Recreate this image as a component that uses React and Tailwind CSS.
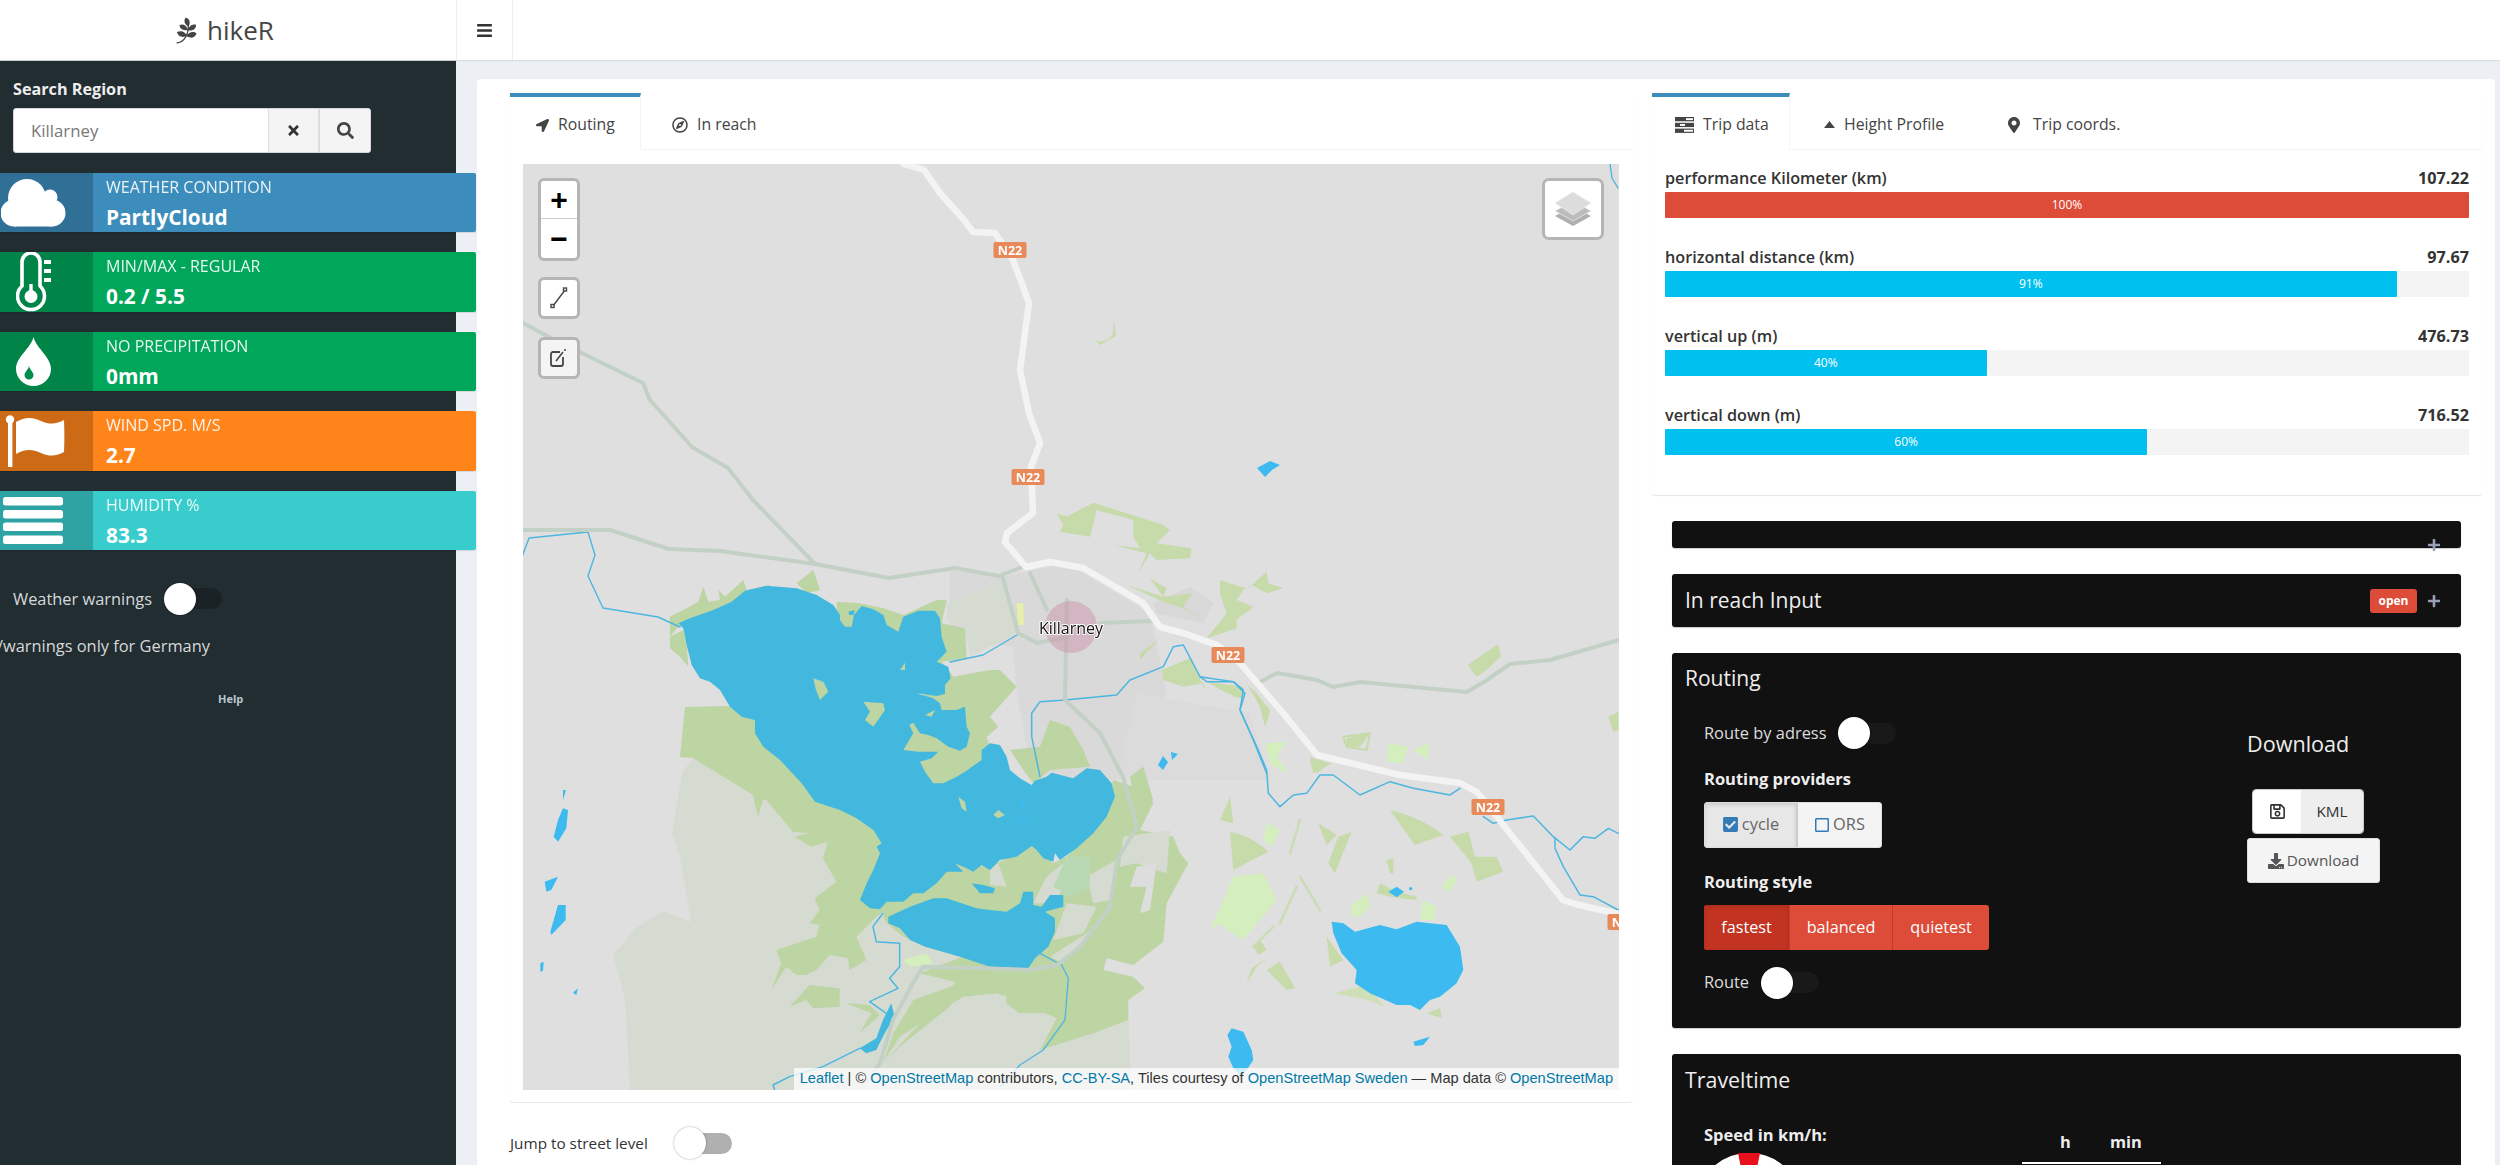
import React from "react";
import {
  FaPagelines,
  FaBars,
  FaTimes,
  FaSearch,
  FaLocationArrow,
  FaRegCompass,
  FaMapMarkerAlt,
  FaPlus,
  FaRegSave,
  FaDownload,
  FaCheckSquare,
  FaRegSquare,
} from "react-icons/fa";

/* =======================
   SIDEBAR ICONS
======================= */

const CloudIcon = () => (
  <svg width="65" height="48" viewBox="0 0 65 48" className="ml-[1px] shrink-0" fill="#fff">
    <circle cx="26" cy="19" r="19" />
    <circle cx="49" cy="18" r="7.5" />
    <circle cx="51" cy="34" r="13.5" />
    <circle cx="13" cy="34" r="13.5" />
    <rect x="13" y="24" width="38" height="23.5" />
  </svg>
);

const ThermoIcon = () => (
  <svg width="36" height="60" viewBox="0 0 36 60" className="ml-[16px] shrink-0" fill="#fff">
    <path d="M6 34 V10 a9 9 0 0 1 18 0 V34 a13.5 13.5 0 1 1 -18 0 Z" fill="none" stroke="#fff" strokeWidth="3.6" />
    <circle cx="15" cy="44.5" r="6.5" />
    <rect x="13.3" y="32" width="3.4" height="10" />
    <rect x="28" y="8" width="7" height="4" />
    <rect x="28" y="17" width="7" height="4" />
    <rect x="28" y="26" width="7" height="4" />
  </svg>
);

const DropIcon = () => (
  <svg width="35" height="49" viewBox="0 0 35 49" className="ml-[16px] shrink-0">
    <path d="M17.5 0 C20 11 35 20 35 32 A17.5 17 0 0 1 0 32 C0 20 15 11 17.5 0 Z" fill="#fff" />
    <path d="M13 29 C14 33 17.5 35 17.5 38 A4.5 4.5 0 0 1 8.5 38 C8.5 35 12 33 13 29 Z" fill="#008d4c" />
  </svg>
);

const FlagIcon = () => (
  <svg width="64" height="52" viewBox="0 0 64 52" className="ml-[5px] shrink-0" fill="#fff">
    <circle cx="5" cy="4.5" r="4.2" />
    <rect x="3" y="5" width="4.4" height="47" />
    <path d="M11 7 C20 2 27 2 36 6 C45 10 52 9 59 5 C59.5 16 59.5 27 59 37 C52 41 45 42 36 38 C27 34 20 34 11 39 Z" />
  </svg>
);

const BarsIcon = () => (
  <svg width="60" height="47" viewBox="0 0 60 47" className="ml-[3px] shrink-0" fill="#fff">
    <rect x="0" y="0" width="60" height="8.4" rx="2.5" />
    <rect x="0" y="13" width="60" height="8.4" rx="2.5" />
    <rect x="0" y="25.5" width="60" height="8.4" rx="2.5" />
    <rect x="0" y="38.5" width="60" height="8.4" rx="2.5" />
  </svg>
);

const TasksIcon = () => (
  <svg width="19" height="16" viewBox="0 0 19 16" className="shrink-0" fill="#444">
    <rect x="0" y="0" width="19" height="4.3" />
    <rect x="0" y="5.8" width="19" height="4.3" />
    <rect x="0" y="11.6" width="19" height="4.3" />
    <rect x="11" y="1.2" width="7" height="1.9" fill="#fff" />
    <rect x="5" y="7" width="5" height="1.9" fill="#fff" />
    <rect x="9" y="12.8" width="9" height="1.9" fill="#fff" />
  </svg>
);

/* =======================
   SMALL PARTS
======================= */

function Switch({ track, className }) {
  return (
    <span className={`relative inline-block h-[32px] w-[58px] shrink-0 ${className || ""}`}>
      <span className={`absolute left-[14px] right-0 top-[5.5px] h-[21px] rounded-full ${track}`} />
      <span className="absolute left-0 top-0 h-[32px] w-[32px] rounded-full bg-white shadow-[0_0_2px_rgba(0,0,0,0.4)]" />
    </span>
  );
}

function InfoBox({ color, icon, label, value }) {
  return (
    <div className={`flex h-[59.4px] w-[476px] rounded-r-[2px] text-white shadow-[0_1px_1px_rgba(0,0,0,0.1)] ${color}`}>
      <div className="flex h-full w-[93px] shrink-0 items-center bg-black/20">{icon}</div>
      <div className="pl-[13px]">
        <div className="mt-[3px] h-[22px] text-[16px] uppercase leading-[22px] opacity-90">{label}</div>
        <div className="mt-[6px] text-[20.8px] font-bold leading-[26px]">{value}</div>
      </div>
    </div>
  );
}

function Tab({ active, icon, label, className }) {
  return (
    <div
      className={`flex h-[57px] items-center gap-[9px] text-[15.8px] text-[#444] ${
        active ? "border-t-[4px] border-t-[#3c8dbc] border-r border-r-[#f4f4f4] bg-white pt-[3px]" : "border-b border-b-[#f4f4f4] pt-[7px]"
      } ${className}`}
    >
      {icon}
      <span>{label}</span>
    </div>
  );
}

function Progress({ label, value, pct, color }) {
  return (
    <div className="mb-[26px]">
      <div className="flex h-[26px] items-center justify-between text-[16.2px] text-[#333]">
        <span className="font-semibold">{label}</span>
        <span className="font-bold">{value}</span>
      </div>
      <div className="mt-[1px] h-[26px] bg-[#f4f4f4]">
        <div
          className={`flex h-full items-center justify-center rounded-[1px] text-[12px] text-white ${color}`}
          style={{ width: `${pct}%` }}
        >
          {pct}%
        </div>
      </div>
    </div>
  );
}

const MapBtn = ({ children, className }) => (
  <div className={`flex h-[42px] w-[42px] items-center justify-center rounded-[6px] border-[3px] border-[#b5b5b5] ${className || "bg-white"}`}>
    {children}
  </div>
);

/* =======================
   MAP DRAWING
   paths are written in crop pixels, hence the scaled groups
======================= */

const Z7 = "translate(670 570) scale(0.3333)";
const Z8 = "translate(523 800) scale(0.3333)";
const Z9 = "translate(880 770) scale(0.3333)";
const Z10 = "translate(950 480) scale(0.3333)";
const Z11 = "translate(1200 660) scale(0.3333)";

const GREEN = "#bdd4a3";
const MINT = "#d5eebd";
const PALE = "#d6dbd2";
const LAKE = "#43b8df";
const LAKE2 = "#3dbbf0";
const RIVER = "#4db6e0";
const GROAD = "#c3d0c5";

function Shield({ x, y }) {
  return (
    <g>
      <rect x={x - 16.5} y={y - 8} width="33" height="16" rx="2" fill="#e8895a" />
      <text x={x} y={y + 4.5} textAnchor="middle" fontSize="12.5" fontWeight="700" fill="#fff" fontFamily="Open Sans, sans-serif">
        N22
      </text>
    </g>
  );
}

function MapArt() {
  return (
    <svg viewBox="523 164 1096 926" className="block h-full w-full blur-[0.7px]" strokeLinejoin="round" strokeLinecap="round">
      {/* park underlay */}
      <path d="M693 758 L682 773 L672 833 L680 857 L691 922 L663 911 L636 928 L613 955 L625 1000 L630 1090 L1131 1090 L1128 1000 L1000 900 L800 800 Z" fill={PALE} />

      {/* town */}
      <g transform={Z10}>
        <path d="M0 270 L160 290 L350 250 L600 400 L650 640 L560 800 L500 900 L250 900 L200 640 L190 500 L0 480 Z" fill="#d9d9d9" />
        <path d="M560 640 L900 700 L960 900 L500 900 Z" fill="#dbdbdb" />
        <path d="M610 370 L720 320 L790 370 L760 430 L620 400 Z" fill="#d8d8d8" />
      </g>

      {/* greens around the big lake */}
      <g transform={Z8} fill={GREEN}>
        <path d="M486 -279 L471 -129 L510 -126 L690 -15 L705 51 L720 0 L730 0 L810 95 L860 100 L815 110 L865 140 L915 125 L900 175 L940 245 L875 295 L890 330 L860 370 L890 375 L880 410 L760 450 L775 490 L745 570 L790 500 L820 525 L850 525 L880 510 L920 465 L975 475 L980 510 L1030 480 L1020 455 L1000 410 L1060 350 L1090 330 L1300 400 L1300 -300 Z" />
        <path d="M800 620 L860 555 L950 565 L950 620 L870 625 L850 600 L800 620 Z" />
        <path d="M970 610 L1040 615 L1070 645 L1010 700 L1045 640 Z" />
        <path d="M1080 790 L1200 660 L1220 630 L1300 545 L1320 540 L1280 620 L1130 740 Z" />
        <path d="M1450 590 L1560 580 L1560 640 L1490 640 L1450 610 Z" />
      </g>
      <g transform={Z7} fill={GREEN}>
        <path d="M0 200 L0 140 L50 115 L85 95 L100 50 L115 95 L150 90 L145 60 L165 80 L220 30 L230 60 L300 45 L300 110 L25 170 Z" />
        <path d="M0 200 L40 180 L50 225 L55 290 L30 260 L0 235 Z" />
        <path d="M380 40 L430 0 L450 60 L410 70 Z" />
        <path d="M500 95 L570 100 L640 115 L700 135 L745 115 L800 90 L830 90 L815 160 L885 175 L890 265 L815 275 L850 320 L960 300 L990 300 L1040 350 L960 440 L985 470 L950 500 L960 530 L935 590 L800 650 L700 560 L720 450 L800 300 L700 200 L500 170 Z" />
        <path d="M640 1040 L650 990 L720 955 L800 915 L860 880 L960 890 L1000 870 L1085 825 L1150 880 L1190 860 L1300 750 L1390 780 L1350 880 L1300 1040 L1180 1170 L1100 1150 L1075 1195 L870 1160 L700 1100 L650 1060 Z" />
        <path d="M1020 540 L1060 600 L1090 640 L1140 600 L1260 590 L1240 540 L1200 470 L1140 450 L1110 530 Z" />
        <path d="M1380 620 L1420 590 L1450 690 L1400 730 Z" />
      </g>
      <g transform={Z9} fill={GREEN}>
        <path d="M700 30 L790 60 L820 100 L780 180 L880 200 L900 250 L925 280 L860 400 L850 515 L760 585 L680 565 L670 600 L760 620 L795 655 L745 690 L745 750 L640 790 L480 840 L530 745 L380 680 L350 670 L250 680 L150 740 L60 800 L10 875 L40 790 L100 690 L240 640 L120 610 L400 500 L600 300 Z" />
      </g>

      {/* pale patches and mint on the green */}
      <g transform={Z7} fill={PALE}>
        <path d="M830 100 L1000 30 L1040 190 L900 260 L885 170 L830 150 Z" />
        <path d="M960 900 L985 880 L1010 950 L960 945 Z" />
        <path d="M1130 920 L1180 880 L1210 930 L1140 1000 L1090 1000 Z" />
        <path d="M1190 1000 L1280 1010 L1240 1090 L1150 1110 Z" />
        <path d="M1250 920 L1340 870 L1320 990 L1270 1000 Z" />
        <path d="M1360 800 L1500 780 L1490 910 L1400 880 L1350 890 Z" />
        <path d="M1140 1160 L1250 1090 L1300 1040 L1180 1180 Z" />
      </g>
      <g transform={Z7}>
        <path d="M1190 860 L1260 860 L1260 950 L1200 980 L1150 950 Z" fill="#b9d9b4" />
        <path d="M1040 100 L1060 100 L1062 165 L1045 165 Z" fill="#e8efa8" />
        <path d="M700 1170 L770 1150 L790 1180 L720 1190 Z" fill={MINT} />
        <path d="M1400 890 L1460 880 L1440 1020 L1410 1030 L1430 950 L1380 950 Z" fill="#dddddd" />
      </g>

      {/* greens north of the N22 and to the east */}
      <g transform={Z10} fill="#c6daaa">
        <path fillRule="evenodd" d="M320 100 L350 110 L430 68 L640 135 L660 150 L620 190 L725 205 L720 235 L620 240 L600 220 L565 280 L590 220 L490 195 L420 170 L330 155 L340 135 Z M440 90 L420 170 L490 195 L570 205 L550 170 L550 120 Z" />
        <path d="M530 315 L640 350 L725 340 L700 380 L765 420 L700 385 L640 365 Z" />
        <path d="M600 295 L650 325 L640 350 Z" />
        <path d="M810 300 L870 320 L895 325 L950 275 L955 310 L1000 325 L950 340 L905 315 L880 330 L860 360 L910 380 L860 420 L860 445 L770 475 L830 400 L810 340 Z" />
        <path d="M635 570 L720 535 L770 640 L760 610 L700 620 L640 600 Z" />
        <path d="M770 605 L880 620 L880 655 L830 640 Z" />
        <path d="M890 610 L960 690 L945 740 L930 680 Z" />
        <path d="M570 540 L630 475 L570 520 Z" />
        <path d="M1080 830 L1140 850 L1100 880 Z" />
        <path d="M1190 775 L1260 760 L1230 800 L1190 800 Z" />
      </g>
      <g transform={Z11}>
        <g fill="#c6daaa">
          <path d="M90 515 Q160 530 205 575 L100 630 Z" />
          <path d="M355 490 L410 525 L380 555 Z" />
          <path d="M455 515 L405 640 L385 610 L415 530 Z" />
          <path d="M570 450 Q660 470 730 525 L645 555 Z" />
          <path d="M750 530 L805 515 L825 590 L890 590 L910 635 L830 665 L815 610 Z" />
          <path d="M330 300 L395 310 L340 340 Z" />
          <path d="M1225 170 L1255 155 L1255 210 L1240 215 Z" />
          <path d="M160 85 L210 155 L195 200 L190 150 Z" />
          <path d="M85 80 L130 90 L130 115 L100 110 Z" />
          <path d="M380 830 L430 900 L390 920 Z" />
          <path d="M200 930 L240 905 L285 985 L260 990 L240 970 Z" />
          <path d="M160 860 L180 840 L200 870 L175 885 Z" />
          <path d="M155 925 L200 895 L170 920 L140 970 Z" />
          <path d="M560 600 L580 595 L580 640 L570 640 Z" />
          <path d="M820 0 L890 0 L860 30 L830 50 Z" />
          <path d="M60 480 L90 410 L100 490 Z" />
          <path d="M400 1000 L500 975 L555 1040 L500 1020 Z" fill="#cfe0b8" />
          <path d="M680 1060 L720 1045 L725 1075 Z" />
        </g>
        <g fill={MINT}>
          <path d="M30 810 L100 650 L190 640 L230 720 L130 840 L90 815 L60 790 Z" />
          <path d="M195 250 L260 245 L230 290 L270 345 L210 310 Z" />
          <path d="M565 250 L625 260 L610 310 L560 305 Z" />
          <path d="M640 270 L685 250 L685 300 Z" />
          <path d="M450 740 L500 700 L510 740 L480 770 L460 770 Z" />
          <path d="M670 720 L710 740 L700 780 L660 780 Z" />
          <path d="M725 680 L755 645 L775 660 L745 695 Z" />
          <path d="M200 490 L240 510 L215 560 L190 540 Z" />
        </g>
        <path d="M540 670 Q590 700 650 710 L650 720 Q580 715 530 700 Z" fill="#c6daaa" />
        <path d="M300 650 L360 750 M290 680 L240 790 M220 800 L160 860 M300 480 L270 580" stroke="#cbdcb6" strokeWidth="8" fill="none" />
        <path d="M430 230 L510 220 L500 270 L440 260 Z" fill="none" stroke="#c6daaa" strokeWidth="6" />
      </g>
      <path d="M1094 339 Q1100 345 1110 338 L1113 333 L1114 320 L1116 336 L1100 345 Z" fill="#c6daaa" />
      <path d="M1468 665 L1498 644 L1501 657 L1476 676 Z" fill="#c6daaa" />

      {/* big lake */}
      <g transform={Z7} fill={LAKE}>
        <path d="M25 160 L60 145 L130 120 L185 95 L225 62 L290 47 L380 55 L440 75 L490 105 L510 135 L510 150 L525 170 L545 170 L552 135 L575 108 L610 118 L640 135 L650 165 L685 185 L700 140 L745 122 L795 122 L810 145 L815 200 L830 245 L800 275 L835 290 L842 325 L825 345 L825 372 L800 378 L740 370 L790 385 L810 400 L815 420 L860 420 L885 410 L890 470 L900 490 L890 530 L870 542 L835 530 L800 505 L775 495 L750 490 L730 458 L718 465 L730 490 L700 540 L745 545 L805 545 L785 565 L750 575 L765 605 L790 640 L820 640 L860 620 L885 605 L935 570 L935 540 L960 520 L990 525 L1010 560 L1020 600 L1050 625 L1085 645 L1095 632 L1130 620 L1145 608 L1210 625 L1250 595 L1290 600 L1325 640 L1335 680 L1310 740 L1270 790 L1220 835 L1170 870 L1155 850 L1150 875 L1120 865 L1100 840 L1085 828 L1040 860 L990 870 L960 900 L935 885 L910 905 L890 895 L855 880 L880 905 L830 905 L800 940 L760 970 L730 970 L700 995 L650 995 L630 1018 L600 1015 L570 990 L590 940 L610 900 L630 850 L620 830 L635 820 L610 780 L560 745 L510 720 L435 695 L395 640 L330 570 L280 530 L255 490 L255 450 L215 440 L180 410 L150 360 L120 335 L90 325 L65 285 L50 225 L40 175 Z" />
        <path d="M655 1040 L720 1010 L790 985 L830 985 L920 1015 L960 1020 L1010 1025 L1050 1000 L1060 965 L1090 965 L1090 1005 L1115 1010 L1140 975 L1180 975 L1180 1010 L1125 1025 L1155 1045 L1155 1085 L1135 1130 L1095 1165 L1075 1195 L960 1190 L870 1160 L765 1130 L720 1110 L690 1075 L655 1060 Z" />
        <path d="M905 940 L940 945 L975 955 L970 970 L930 970 Z" />
        <path d="M535 125 L555 120 L550 135 L538 135 Z" />
      </g>
      <g transform={Z7} fill={GREEN}>
        <path d="M430 325 L460 335 L475 365 L450 390 L438 360 Z" />
        <path d="M580 395 L640 400 L645 420 L610 470 L585 450 L600 425 Z" />
        <path d="M690 300 L705 278 L705 300 Z" />
        <path d="M865 680 L885 695 L890 725 L875 715 Z" />
        <path d="M970 735 L985 720 L1005 735 L985 745 Z" />
        <path d="M765 435 L795 420 L785 440 Z" />
      </g>

      {/* small lakes */}
      <g transform={Z8} fill={LAKE2}>
        <path d="M120 25 L135 30 L130 85 L105 125 L92 110 L105 60 Z" />
        <path d="M65 245 L105 230 L85 270 L70 275 Z" />
        <path d="M105 315 L128 315 L128 360 L85 405 L82 395 Z" />
        <path d="M52 490 L62 485 L60 512 L52 515 Z" />
        <path d="M150 578 L165 565 L160 585 Z" />
        <path d="M1105 610 L1115 650 L1085 700 L1060 750 L1030 760 L1010 745 L1060 715 L1080 660 Z" fill={LAKE} />
      </g>
      <path d="M563 790 L566 790 L563 800 Z" fill={LAKE2} />
      <g transform={Z11} fill={LAKE2}>
        <path d="M395 785 L430 790 L465 815 L540 795 L590 808 L650 785 L740 795 L780 860 L790 930 L770 970 L720 1010 L690 1020 L660 1050 L630 1035 L590 1035 L510 1000 L465 970 L470 930 L425 880 L400 820 Z" />
        <path d="M565 695 L590 680 L612 695 L590 712 Z" />
        <circle cx="632" cy="686" r="5" />
        <path d="M640 1145 L690 1130 L670 1155 L645 1158 Z" />
        <path d="M95 1105 L130 1115 L155 1170 L160 1200 L140 1230 L125 1250 L100 1225 L85 1190 L95 1160 L82 1125 Z" />
      </g>
      <path d="M1257 468 L1270 461 L1280 465 L1272 470 L1265 477 Z" fill={LAKE2} />
      <path d="M1163 756 L1168 762 L1163 770 L1158 765 Z M1171 752 L1178 754 L1172 760 Z" fill={LAKE2} />
      <path d="M1022 800 L1026 806 L1020 808 Z M1022 815 L1028 820 L1022 822 Z" fill={LAKE2} />

      {/* rivers */}
      <g fill="none" stroke={RIVER} strokeWidth="1.4">
        <path d="M950 662 L983 655 L1017 635" />
        <path d="M522 557 L529 538 L588 532 L595 555 L588 576 L603 608 L658 617 L680 627" />
        <path d="M1610 164 L1612 178 L1618 188" />
        <g transform={Z10} strokeWidth="4.5">
          <path d="M270 890 L245 770 L245 700 L270 665 L345 660 L500 645 L540 600 L640 560 L670 500 L700 495 L750 590 L850 605 L885 640 L870 690 L910 780 L950 880" />
        </g>
        <g transform={Z11} strokeWidth="4.5">
          <path d="M0 50 L20 65 L100 65 L130 90 L120 150 L170 260 L200 330 L205 400 L240 440 L280 405 L320 400 L360 345 L400 345 L480 405 L570 365 L640 385 L750 405 L780 385" />
          <path d="M850 470 L880 490 L920 480 L1000 468 L1060 530 L1110 570 L1150 530 L1185 535 L1225 505 L1255 520" />
          <path d="M1065 535 L1065 565 L1090 620 L1140 705 L1180 710 L1255 750" />
        </g>
        <g transform={Z8} strokeWidth="4.5">
          <path d="M1130 430 L1130 500 L1100 535 L1125 565 L1040 605 L1090 640" />
          <path d="M1080 340 L1050 380 L1060 425 L1130 430" />
          <path d="M1010 745 L900 800 L800 830 L750 855 L755 870" />
        </g>
        <g transform={Z9} strokeWidth="4">
          <path d="M480 550 L545 585 L565 625 L555 750 L490 840 L420 885 L360 950" />
        </g>
      </g>

      {/* roads */}
      <g fill="none" stroke={GROAD} strokeWidth="4">
        <path d="M523 323 L549 337 L643 383 L650 400 L692 447 L728 468 L753 500 L815 564" />
        <path d="M522 530 L610 530 L669 549 L720 551 L815 564 L889 578 L955 568 L999 576 L1022 567" />
        <path d="M1003 578 L1018 633 L1037 643 L1067 637" />
        <path d="M1030 573 L1047 610" />
        <path d="M1067 600 L1065 700 L1100 733 L1123 777 L1137 827 L1117 860 L1110 907 L1080 947 L1057 965 L1030 970 L980 968 L923 967 L913 983 L893 1020 L880 1063 L860 1090" />
        <path d="M1100 623 L1153 621" />
        <path d="M1260 682 L1277 673 L1317 680 L1333 687 L1360 682 L1467 692 L1487 680 L1510 664 L1550 660 L1619 640" />
      </g>
      <path d="M904 164 L924 170 L940 193 L964 220 L973 232 L995 233 L1013 260 L1029 303 L1020 370 L1029 413 L1040 443 L1031 467 L1033 513 L1007 533 L1005 542 L1026 567 L1050 562 L1083 568 L1143 603 L1160 627 L1183 633 L1217 645 L1240 663 L1283 713 L1317 755 L1400 775 L1460 783 L1477 792 L1497 817 L1563 900 L1575 904 L1619 914" fill="none" stroke="#f3f3f3" strokeWidth="6.5" />

      {/* labels */}
      <Shield x={1010} y={250} />
      <Shield x={1028} y={477} />
      <Shield x={1228} y={655} />
      <Shield x={1488} y={807} />
      <Shield x={1624} y={922} />

      <circle cx="1071" cy="627" r="26" fill="#c98ca4" fillOpacity="0.45" />
      <text
        x="1071"
        y="634"
        textAnchor="middle"
        fontSize="16"
        fill="#111"
        stroke="#fff"
        strokeWidth="2"
        paintOrder="stroke"
        fontFamily="Open Sans, sans-serif"
      >
        Killarney
      </text>
    </svg>
  );
}

/* =======================
   MAIN COMPONENT
======================= */

export default function App() {
  return (
    <div className="flex h-[1165px] w-[2500px] flex-col overflow-hidden bg-[#ecf0f5] font-['Open_Sans',sans-serif] text-[15.3px] text-[#333]">
      {/* ================= HEADER ================= */}
      <header className="flex h-[60px] shrink-0 bg-white shadow-[0_1px_1px_rgba(0,0,0,0.08)]">
        <div className="flex w-[456px] items-center justify-center gap-[7px] pr-[9px] text-[#444]">
          <FaPagelines size={27} />
          <span className="text-[26px]">hikeR</span>
        </div>
        <div className="flex w-[57px] items-center justify-center border-x border-[#eeeeee] text-[#333]">
          <FaBars size={17} />
        </div>
      </header>

      <div className="flex min-h-0 flex-1">
        {/* ================= SIDEBAR ================= */}
        <aside className="relative z-10 w-[456px] shrink-0 border-t border-t-[#c9cdd0] bg-[#222d32] text-[#b8c7ce]">
          <div className="px-[13px] pt-[18px] text-[16.2px] font-bold leading-[20px] text-[#eeeeee]">Search Region</div>
          <div className="mx-[13px] mt-[9px] flex h-[45px] w-[358px] overflow-hidden rounded-[3px] border border-[#d2d6de] bg-white">
            <div className="flex-1 pl-[17px] text-[16.8px] leading-[43px] text-[#777]">Killarney</div>
            <div className="flex w-[50px] items-center justify-center border-l border-[#ddd] bg-[#f4f4f4] text-[#333]">
              <FaTimes size={15} />
            </div>
            <div className="flex w-[52px] items-center justify-center border-l-2 border-[#ddd] bg-[#f4f4f4] text-[#444]">
              <FaSearch size={17} />
            </div>
          </div>

          <div className="mt-[20px] flex flex-col gap-[20px]">
            <InfoBox color="bg-[#3c8dbc]" icon={<CloudIcon />} label="Weather condition" value="PartlyCloud" />
            <InfoBox color="bg-[#00a65a]" icon={<ThermoIcon />} label="Min/Max - regular" value="0.2 / 5.5" />
            <InfoBox color="bg-[#00a65a]" icon={<DropIcon />} label="No precipitation" value="0mm" />
            <InfoBox color="bg-[#ff851b]" icon={<FlagIcon />} label="Wind spd. m/s" value="2.7" />
            <InfoBox color="bg-[#39cccc]" icon={<BarsIcon />} label="Humidity %" value="83.3" />
          </div>

          <div className="mt-[33px] flex items-center pl-[13px] text-[16.4px] text-[#d6d9da]">
            <span className="w-[151px]">Weather warnings</span>
            <Switch track="bg-[#1a2226]" />
          </div>
          <div className="ml-[-3px] mt-[21px] text-[16.4px] leading-[20px] text-[#d6d9da]">/warnings only for Germany</div>
          <div className="mt-[35px] pl-[218px] text-[11px] font-bold text-[#b8c7ce]">Help</div>
        </aside>

        {/* ================= CONTENT ================= */}
        <main className="min-w-0 flex-1 pl-[21px] pt-[19px]">
          <div className="flex h-[1200px] w-[2018px] gap-[20px] rounded-[4px] bg-white pl-[33px] pr-[13px] pt-[14px]">
            {/* LEFT COLUMN */}
            <section className="w-[1122px] shrink-0">
              <div className="rounded-[3px] bg-white shadow-[0_1px_1px_rgba(0,0,0,0.1)]">
                <div className="flex">
                  <Tab active icon={<FaLocationArrow size={13} />} label="Routing" className="w-[131px] pl-[26px]" />
                  <Tab icon={<FaRegCompass size={16} />} label="In reach" className="flex-1 gap-[8px] pl-[31px]" />
                </div>
                <div className="px-[13px] pb-[12px] pt-[14px]">
                  <div className="relative h-[926px] overflow-hidden bg-[#dfdfdf]">
                    <MapArt />

                    <div className="absolute left-[15px] top-[14px] w-[42px] overflow-hidden rounded-[6px] border-[3px] border-[#b5b5b5] bg-white">
                      <div className="flex h-[38px] items-center justify-center border-b border-[#ccc] font-['Liberation_Sans',sans-serif] text-[30px] font-bold leading-none text-black">+</div>
                      <div className="flex h-[39px] items-center justify-center font-['Liberation_Sans',sans-serif] text-[30px] font-bold leading-none text-black">−</div>
                    </div>
                    <div className="absolute left-[15px] top-[113px]">
                      <MapBtn>
                        <svg width="18" height="22" viewBox="0 0 18 22" fill="none" stroke="#464646" strokeWidth="1.4">
                          <line x1="3" y1="19" x2="15" y2="3" />
                          <rect x="1" y="17.5" width="3" height="3" fill="#fff" />
                          <rect x="13.5" y="1" width="3" height="3" fill="#fff" />
                        </svg>
                      </MapBtn>
                    </div>
                    <div className="absolute left-[15px] top-[173px]">
                      <MapBtn className="bg-[#f4f4f4]">
                        <svg width="18" height="20" viewBox="0 0 18 20" fill="none" stroke="#464646" strokeWidth="1.8">
                          <path d="M10 4 H3 a2 2 0 0 0 -2 2 V16 a2 2 0 0 0 2 2 H11 a2 2 0 0 0 2 -2 V9" />
                          <path d="M6 13 L13 4" strokeWidth="1.6" />
                          <circle cx="15" cy="2" r="1" fill="#464646" stroke="none" />
                        </svg>
                      </MapBtn>
                    </div>

                    <div className="absolute right-[15px] top-[14px] flex h-[62px] w-[62px] items-center justify-center rounded-[7px] border-[3px] border-[#b5b5b5] bg-white">
                      <svg width="36" height="34" viewBox="0 0 36 34">
                        <path d="M18 14 L36 24 L18 34 L0 24 Z" fill="#b0b0b0" />
                        <path d="M18 9 L36 19 L18 29 L0 19 Z" fill="#bcbcbc" stroke="#eee" strokeWidth="0.7" />
                        <path d="M18 0 L36 11 L18 23 L0 11 Z" fill="#dcdcdc" stroke="#eee" strokeWidth="0.7" />
                      </svg>
                    </div>

                    <div className="absolute bottom-0 right-0 flex h-[22px] w-[825px] items-center justify-end whitespace-nowrap bg-white/75 pr-[6px] font-['Liberation_Sans',sans-serif] text-[14.6px] text-[#333]">
                      <span className="text-[#0078a8]">Leaflet</span>&nbsp;| ©&nbsp;
                      <span className="text-[#0078a8]">OpenStreetMap</span>&nbsp;contributors,&nbsp;
                      <span className="text-[#0078a8]">CC-BY-SA</span>, Tiles courtesy of&nbsp;
                      <span className="text-[#0078a8]">OpenStreetMap Sweden</span>&nbsp;— Map data ©&nbsp;
                      <span className="text-[#0078a8]">OpenStreetMap</span>
                    </div>
                  </div>
                </div>
              </div>

              <div className="mt-[25px] flex items-center">
                <span className="w-[164px]">Jump to street level</span>
                <Switch track="bg-[#b0b0b0]" />
              </div>
            </section>

            {/* RIGHT COLUMN */}
            <section className="w-[830px] shrink-0">
              <div className="h-[402px] rounded-[3px] bg-white shadow-[0_1px_1px_rgba(0,0,0,0.1)]">
                <div className="flex">
                  <Tab active icon={<TasksIcon />} label="Trip data" className="w-[138px] gap-[7px] pl-[23px]" />
                  <Tab icon={<svg width="11" height="8" viewBox="0 0 11 8" fill="#444"><path d="M5.5 0 L11 7 H0 Z" /></svg>} label="Height Profile" className="w-[192px] pl-[34px]" />
                  <Tab icon={<FaMapMarkerAlt size={16} />} label="Trip coords." className="flex-1 gap-[11px] pl-[24px]" />
                </div>
                <div className="px-[13px] pt-[15px]">
                  <Progress label="performance Kilometer (km)" value="107.22" pct={100} color="bg-[#dd4b39]" />
                  <Progress label="horizontal distance (km)" value="97.67" pct={91} color="bg-[#00c0ef]" />
                  <Progress label="vertical up (m)" value="476.73" pct={40} color="bg-[#00c0ef]" />
                  <Progress label="vertical down (m)" value="716.52" pct={60} color="bg-[#00c0ef]" />
                </div>
              </div>

              <div className="ml-[20px] mt-[26px] flex w-[789px] flex-col gap-[26px] text-[#eee]">
                <div className="relative h-[27px] rounded-[3px] bg-[#111111] shadow-[0_1px_1px_rgba(0,0,0,0.2)]">
                  <FaPlus size={14} className="absolute right-[20px] top-[17px] text-[#97a0b3]" />
                </div>

                <div className="flex h-[53px] items-center rounded-[3px] bg-[#111111] pl-[13px] pr-[20px] shadow-[0_1px_1px_rgba(0,0,0,0.2)]">
                  <span className="flex-1 text-[21px]">In reach Input</span>
                  <span className="flex h-[24px] w-[47px] items-center justify-center rounded-[3px] bg-[#dd4b39] text-[12px] font-bold text-white">open</span>
                  <FaPlus size={14} className="ml-[10px] text-[#97a0b3]" />
                </div>

                <div className="flex h-[375px] rounded-[3px] bg-[#111111] shadow-[0_1px_1px_rgba(0,0,0,0.2)]">
                  <div className="flex-1">
                    <div className="pl-[13px] pt-[11px] text-[21px] leading-[28px]">Routing</div>
                    <div className="pl-[32px] pt-[25px]">
                      <div className="flex items-center text-[16.4px] text-[#ddd]">
                        <span className="w-[134px]">Route by adress</span>
                        <Switch track="bg-[#191919]" />
                      </div>
                      <div className="mt-[18px] text-[16.5px] font-bold text-[#eee]">Routing providers</div>
                      <div className="mt-[10px] flex h-[46px] w-[178px] overflow-hidden rounded-[3px] border border-[#ddd] bg-[#f4f4f4] text-[16.4px] text-[#666]">
                        <div className="flex w-[93px] items-center justify-center gap-[3px] border-r-2 border-[#ccc] bg-[#e7e7e7] shadow-[inset_0_2px_4px_rgba(0,0,0,0.12)]">
                          <FaCheckSquare size={17} className="text-[#337ab7]" />
                          <span>cycle</span>
                        </div>
                        <div className="flex flex-1 items-center justify-center gap-[3px]">
                          <FaRegSquare size={16} className="text-[#337ab7]" />
                          <span>ORS</span>
                        </div>
                      </div>
                      <div className="mt-[22px] text-[16.5px] font-bold text-[#eee]">Routing style</div>
                      <div className="mt-[10px] flex h-[45px] w-[285px] overflow-hidden rounded-[3px] bg-[#dd4b39] text-[16.2px] text-white">
                        <div className="flex w-[85px] items-center justify-center bg-[#c23321] shadow-[inset_0_2px_4px_rgba(0,0,0,0.12)]">fastest</div>
                        <div className="flex w-[104px] items-center justify-center border-x border-[#c23a29]">balanced</div>
                        <div className="flex flex-1 items-center justify-center">quietest</div>
                      </div>
                      <div className="mt-[17px] flex items-center text-[16.4px] text-[#ddd]">
                        <span className="w-[57px]">Route</span>
                        <Switch track="bg-[#191919]" />
                      </div>
                    </div>
                  </div>

                  <div className="w-[214px] shrink-0 pt-[76px]">
                    <div className="text-[21.6px] leading-[30px]">Download</div>
                    <div className="ml-[5px] mt-[30px] flex h-[45px] w-[112px] overflow-hidden rounded-[4px] border border-[#ccc] text-[15.3px] text-[#333]">
                      <div className="flex w-[48px] items-center justify-center bg-white">
                        <FaRegSave size={17} />
                      </div>
                      <div className="flex flex-1 items-center justify-center bg-[#eeeeee]">KML</div>
                    </div>
                    <div className="mt-[4px] flex h-[45px] w-[133px] items-center justify-center gap-[3px] rounded-[3px] border border-[#ddd] bg-[#f4f4f4] text-[15.3px] text-[#555]">
                      <FaDownload size={16} />
                      <span>Download</span>
                    </div>
                  </div>
                </div>

                <div className="relative h-[300px] rounded-[3px] bg-[#111111]">
                  <div className="pl-[13px] pt-[12px] text-[21.4px] leading-[28px]">Traveltime</div>
                  <div className="pl-[32px] pt-[29px] text-[16.5px] font-bold">Speed in km/h:</div>
                  <svg width="106" height="106" viewBox="0 0 106 106" className="absolute left-[24px] top-[99px]">
                    <circle cx="53" cy="53" r="44" fill="none" stroke="#fff" strokeWidth="18" />
                    <path d="M42 0 H64 L60 20 H46 Z" fill="#e8101a" />
                  </svg>
                  <div className="absolute left-[350px] top-[76px] w-[139px] border-b-2 border-white pb-[7px] text-[16.4px] font-bold text-[#eee]">
                    <div className="flex">
                      <span className="ml-[38px] w-[50px]">h</span>
                      <span>min</span>
                    </div>
                  </div>
                </div>
              </div>
            </section>
          </div>
        </main>
      </div>
    </div>
  );
}
